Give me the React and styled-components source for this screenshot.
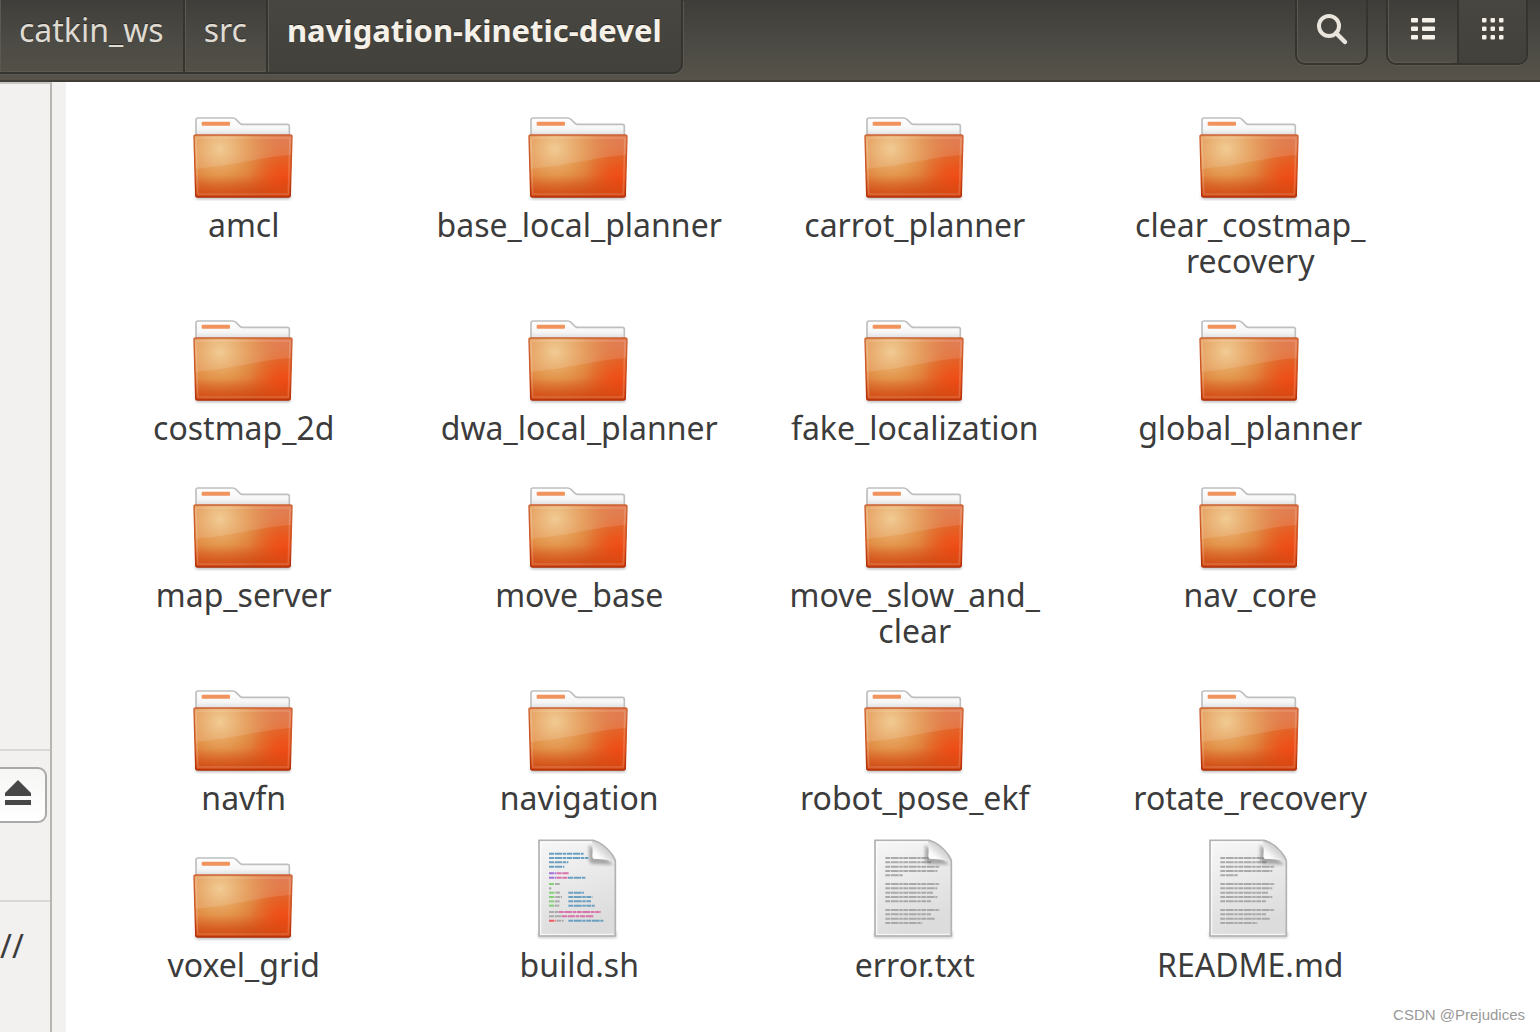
import React from 'react'
import styled, { createGlobalStyle, css } from 'styled-components'

const colors = {
	edge: '#35342f',
	highlight: '#5b5951',
	barText: '#dfdbd2',
	barTextActive: '#f5f1e8',
	panel: '#f2f1f0',
	line: '#dad8d5',
	text: '#3c3c3c',
}

const GlobalStyle = createGlobalStyle`
	* {
		box-sizing: border-box;
	}

	body {
		background: #fff;
		color: ${colors.text};
		font-family: "Noto Sans", "Open Sans", sans-serif;
		font-size: 32px;
		margin: 0;
	}
`

const Window = styled.div`
	display: flex;
	flex-direction: column;
	min-height: 100vh;
	position: relative;
`

const Toolbar = styled.header`
	align-items: flex-start;
	background: linear-gradient(#3e3d39, #4b4a44 55%, #57534a);
	border-bottom: 2px solid #403d36;
	display: flex;
	height: 82px;
	justify-content: space-between;
	padding-right: 12px;
`

const PathBar = styled.nav`
	display: flex;
`

const PathButton = styled.button`
	background: linear-gradient(#3f3e3a, #4b4a44 55%, #535047);
	border: 0;
	border-bottom: 2px solid ${colors.edge};
	border-right: 2px solid ${colors.edge};
	box-shadow: inset 1px -1px ${colors.highlight}, 0 1px ${colors.highlight};
	color: ${colors.barText};
	font: inherit;
	height: 74px;
	line-height: 36px;
	padding: 0 19px 12px;
	text-shadow: 0 -1px #2b2a27;

	${({ $active }) => $active && css`
		background: linear-gradient(#474640, #43413b);
		border-bottom-right-radius: 10px;
		box-shadow: inset 1px 0 ${colors.highlight}, 1px 1px ${colors.highlight};
		color: ${colors.barTextActive};
		font-size: 31px;
		font-weight: 700;
	`}
`

const Tools = styled.div`
	display: flex;
	gap: 18px;
`

const ToolGroup = styled.div`
	border: 2px solid ${colors.edge};
	border-radius: 0 0 10px 10px;
	border-top: 0;
	box-shadow: 0 1px ${colors.highlight};
	display: flex;
	height: 65px;
	overflow: hidden;
`

const ToolButton = styled.button`
	align-items: center;
	background: ${({ $active }) => $active ? 'linear-gradient(#474640, #43413b)' : 'transparent'};
	border: 0;
	border-radius: 0 0 8px 8px;
	box-shadow: ${({ $active }) => $active ? 'none' : `inset 1px -1px ${colors.highlight}`};
	display: flex;
	justify-content: center;
	padding: 0 0 6px;
	width: 69px;

	& + & {
		border-left: 2px solid ${colors.edge};
		border-radius: 0 0 8px 0;
	}
`

const Body = styled.div`
	display: flex;
	flex: 1;
`

const Sidebar = styled.aside`
	background: ${colors.panel};
	border-right: 2px solid #b9b6b1;
	border-top: 2px solid #c9c7c3;
	display: flex;
	flex-direction: column;
	width: 52px;
`

const Places = styled.div`
	height: 665px;
`

const Device = styled.div`
	border-bottom: 2px solid ${colors.line};
	border-top: 2px solid ${colors.line};
	display: flex;
	height: 153px;
	justify-content: flex-end;
	padding: 16px 3px 0 0;
`

const EjectButton = styled.button`
	align-items: center;
	background: linear-gradient(#f6f6f5, #fff);
	border: 2px solid #aaa9a7;
	border-left: 0;
	border-radius: 0 9px 9px 0;
	display: flex;
	height: 56px;
	padding: 0 0 4px 4px;
	width: 47px;
`

const Network = styled.div`
	line-height: 36px;
	padding: 26px 28px 0 0;
	text-align: right;
`

const Gutter = styled.div`
	background: ${colors.panel};
	width: 14px;
`

const Files = styled.main`
	align-content: start;
	align-items: start;
	background: #fff;
	display: grid;
	flex: 1;
	gap: 22px 0;
	grid-template-columns: repeat(4, minmax(0, 1fr));
	padding: 16px 122px 16px 10px;
`

const Entry = styled.a`
	align-items: center;
	color: inherit;
	display: flex;
	flex-direction: column;
	gap: 5px;
	line-height: 36px;
	text-align: center;
	text-decoration: none;
`

const EntryName = styled.span`
	max-width: 296px;
`

const Watermark = styled.span`
	bottom: 8px;
	color: #999;
	font-family: "Liberation Sans", Arial, sans-serif;
	font-size: 15px;
	line-height: 18px;
	position: absolute;
	right: 15px;
`

const SearchIcon = () => (
	<svg width="36" height="36" viewBox="0 0 36 36" fill="none" stroke="#e9e5dc">
		<circle cx="15" cy="15" r="10" strokeWidth="4" />
		<path d="M22 22l9 9" strokeWidth="4.5" strokeLinecap="round" />
	</svg>
)

const ListIcon = () => (
	<svg width="26" height="24" viewBox="0 0 26 24" fill="#f5f1e8">
		{[1, 9.5, 18].map(y => (
			<g key={y}>
				<rect x="1" y={y} width="7" height="4.5" rx="1" />
				<rect x="12" y={y} width="13" height="4.5" rx="1" />
			</g>
		))}
	</svg>
)

const GridIcon = () => (
	<svg width="24" height="24" viewBox="0 0 24 24" fill="#f5f1e8">
		{[1, 9.5, 18].map(y => [1, 9.5, 18].map(x => (
			<rect key={`${x}-${y}`} x={x} y={y} width="4.5" height="4.5" rx="1" />
		)))}
	</svg>
)

const EjectIcon = () => (
	<svg width="28" height="26" viewBox="0 0 28 26" fill="#474747">
		<path d="M14 0L27 13V16H1V13Z" />
		<rect x="1" y="20" width="26" height="5" />
	</svg>
)

const IconDefs = () => (
	<svg width="0" height="0" style={{ position: 'absolute' }} aria-hidden="true">
		<defs>
			<linearGradient id="folder-base" x1="0" y1="0" x2="0" y2="1">
				<stop offset="0" stopColor="#dd6a3c" />
				<stop offset="0.6" stopColor="#e0682b" />
				<stop offset="1" stopColor="#d2480f" />
			</linearGradient>
			<radialGradient id="folder-light" gradientUnits="userSpaceOnUse" cx="150" cy="146" r="215">
				<stop offset="0" stopColor="#efc585" />
				<stop offset="0.4" stopColor="#e3974d" stopOpacity="0.9" />
				<stop offset="0.7" stopColor="#e07a38" stopOpacity="0.55" />
				<stop offset="1" stopColor="#de6430" stopOpacity="0" />
			</radialGradient>
			<radialGradient id="folder-glow" gradientUnits="userSpaceOnUse" cx="345" cy="242" r="110">
				<stop offset="0" stopColor="#f04a14" />
				<stop offset="0.35" stopColor="#ee5018" stopOpacity="0.8" />
				<stop offset="1" stopColor="#e8601c" stopOpacity="0" />
			</radialGradient>
			<linearGradient id="folder-shade" x1="0" y1="0" x2="0" y2="1">
				<stop offset="0.65" stopColor="#cf4410" stopOpacity="0" />
				<stop offset="1" stopColor="#cf4410" stopOpacity="0.75" />
			</linearGradient>
			<linearGradient id="folder-edge" x1="0" y1="0" x2="0" y2="1">
				<stop offset="0" stopColor="#cd6234" />
				<stop offset="0.6" stopColor="#cc4e1c" />
				<stop offset="1" stopColor="#b02c06" />
			</linearGradient>
			<linearGradient id="folder-paper" x1="0" y1="0" x2="0" y2="1">
				<stop offset="0" stopColor="#fff" />
				<stop offset="0.6" stopColor="#f6f6f6" />
				<stop offset="1" stopColor="#d6d8da" />
			</linearGradient>
			<linearGradient id="sheet" x1="0" y1="0" x2="0.3" y2="1">
				<stop offset="0" stopColor="#f7f7f7" />
				<stop offset="1" stopColor="#dcdcdc" />
			</linearGradient>
			<linearGradient id="sheet-fold" x1="0" y1="1" x2="0.55" y2="0.45">
				<stop offset="0" stopColor="#fff" />
				<stop offset="0.5" stopColor="#fafafa" />
				<stop offset="1" stopColor="#d4d4d4" />
			</linearGradient>
			<filter id="soft" x="-20%" y="-20%" width="140%" height="140%">
				<feGaussianBlur stdDeviation="4" />
			</filter>
		</defs>
	</svg>
)

const folderFront = 'M77 105H361Q367 105 366 111L361 285Q361 291 355 291H83Q77 291 77 285L72 111Q71 105 77 105Z'

const FolderIcon = () => (
	<svg width="104" height="104" viewBox="66 -6 312 312">
		<path d="M76 284H362V294Q362 298 354 298H84Q76 298 76 292Z" fill="#777" opacity="0.5" filter="url(#soft)" />
		<path
			d="M78 110V60Q78 54 84 54H188Q194 54 198 58L210 70Q213 73 218 73H352Q358 73 358 79V110Z"
			fill="url(#folder-paper)"
			stroke="#bdbfc1"
			strokeWidth="5"
		/>
		<rect x="95" y="65" width="85" height="12" rx="3" fill="#f0935c" />
		{['base', 'light', 'glow', 'shade'].map(layer => (
			<path key={layer} d={folderFront} fill={`url(#folder-${layer})`} />
		))}
		<path d="M73 107H366L364 164Q300 170 220 186Q150 200 75 207Z" fill="#fff" opacity="0.12" />
		<path d="M78 114H360L355 282H83Z" fill="none" stroke="#fff" strokeOpacity="0.16" strokeWidth="5" />
		<path d={folderFront} fill="none" stroke="url(#folder-edge)" strokeWidth="4" />
	</svg>
)

// [y, [[x, width, color], ...]]
const scriptLines = [
	[71, [[90, 104, '#6ba0c0']]],
	[84, [[90, 118, '#6ba0c0']]],
	[97, [[90, 58, '#6ba0c0']]],
	[110, [[90, 46, '#6ba0c0']]],
	[130, [[90, 22, '#a571d6'], [113, 36, '#d973ab']]],
	[143, [[90, 22, '#a571d6'], [113, 32, '#d973ab'], [147, 53, '#6ba0c0']]],
	[162, [[90, 16, '#85cf78'], [108, 14, '#aaa']]],
	[175, [[90, 7, '#aaa']]],
	[188, [[90, 18, '#85cf78'], [109, 14, '#aaa'], [148, 47, '#6ba0c0']]],
	[201, [[90, 18, '#85cf78'], [109, 20, '#aaa'], [148, 72, '#6ba0c0']]],
	[214, [[90, 16, '#85cf78'], [107, 16, '#aaa'], [148, 68, '#6ba0c0']]],
	[227, [[90, 16, '#85cf78'], [107, 14, '#aaa'], [148, 79, '#6ba0c0']]],
	[246, [[90, 28, '#aaa'], [119, 127, '#d973ab']]],
	[259, [[90, 38, '#aaa'], [129, 96, '#d973ab']]],
	[272, [[90, 20, '#ea5f5f'], [112, 22, '#aaa'], [148, 105, '#6ba0c0']]],
]

const textLines = [
	[84, 130], [97, 138], [110, 163], [123, 156], [136, 53],
	[162, 163], [175, 156], [188, 143], [201, 156], [214, 137],
	[240, 163], [253, 137], [266, 150], [279, 111],
].map(([y, width]) => [y, [[91, width, '#a9a9a9']]])

const SheetIcon = ({ lines }) => (
	<svg width="104" height="104" viewBox="24 24 312 312">
		<rect x="58" y="304" width="234" height="20" fill="#777" opacity="0.4" filter="url(#soft)" />
		<path d="M60 31H222Q250 40 268 62Q286 80 289 94V318H60Z" fill="url(#sheet)" stroke="#b2b2b2" strokeWidth="5" />
		<path d="M65 36H218M65 36V313H284" fill="none" stroke="#fff" strokeOpacity="0.7" strokeWidth="4" />
		{lines.map(([y, parts]) => parts.map(([x, width, fill]) => (
			<line
				key={`${x}-${y}`}
				x1={x}
				x2={x + width}
				y1={y}
				y2={y}
				stroke={fill}
				strokeWidth="6"
				strokeDasharray="15 2 23 2 10 2"
			/>
		)))}
		<path d="M210 44V90Q212 104 226 102L284 104Z" fill="#555" opacity="0.45" filter="url(#soft)" />
		<path d="M218 31Q223 50 220 78Q220 88 230 87Q258 86 289 95Q284 74 264 56Q244 36 218 31Z" fill="url(#sheet-fold)" />
		<path d="M218 31Q244 36 264 56Q284 74 289 95" fill="none" stroke="#b2b2b2" strokeWidth="4" />
	</svg>
)

const entries = [
	{ name: 'amcl' },
	{ name: 'base_local_planner' },
	{ name: 'carrot_planner' },
	{ name: 'clear_costmap_recovery' },
	{ name: 'costmap_2d' },
	{ name: 'dwa_local_planner' },
	{ name: 'fake_localization' },
	{ name: 'global_planner' },
	{ name: 'map_server' },
	{ name: 'move_base' },
	{ name: 'move_slow_and_clear' },
	{ name: 'nav_core' },
	{ name: 'navfn' },
	{ name: 'navigation' },
	{ name: 'robot_pose_ekf' },
	{ name: 'rotate_recovery' },
	{ name: 'voxel_grid' },
	{ name: 'build.sh', lines: scriptLines },
	{ name: 'error.txt', lines: textLines },
	{ name: 'README.md', lines: textLines },
]

// long names may only wrap after an underscore
const breakable = name => name.replace(/_/g, '_\u200b')

const App = () => {
	return (
		<Window>
			<GlobalStyle />
			<IconDefs />
			<Toolbar>
				<PathBar>
					<PathButton>catkin_ws</PathButton>
					<PathButton>src</PathButton>
					<PathButton $active>navigation-kinetic-devel</PathButton>
				</PathBar>
				<Tools>
					<ToolGroup>
						<ToolButton aria-label="Search"><SearchIcon /></ToolButton>
					</ToolGroup>
					<ToolGroup>
						<ToolButton aria-label="List view"><ListIcon /></ToolButton>
						<ToolButton aria-label="Icon view" $active><GridIcon /></ToolButton>
					</ToolGroup>
				</Tools>
			</Toolbar>
			<Body>
				<Sidebar>
					<Places />
					<Device>
						<EjectButton aria-label="Eject"><EjectIcon /></EjectButton>
					</Device>
					<Network>//</Network>
				</Sidebar>
				<Gutter />
				<Files>
					{entries.map(({ name, lines }) => (
						<Entry key={name} href={`#${name}`}>
							{lines ? <SheetIcon lines={lines} /> : <FolderIcon />}
							<EntryName>{breakable(name)}</EntryName>
						</Entry>
					))}
				</Files>
			</Body>
			<Watermark>CSDN @Prejudices</Watermark>
		</Window>
	)
}

export default App
